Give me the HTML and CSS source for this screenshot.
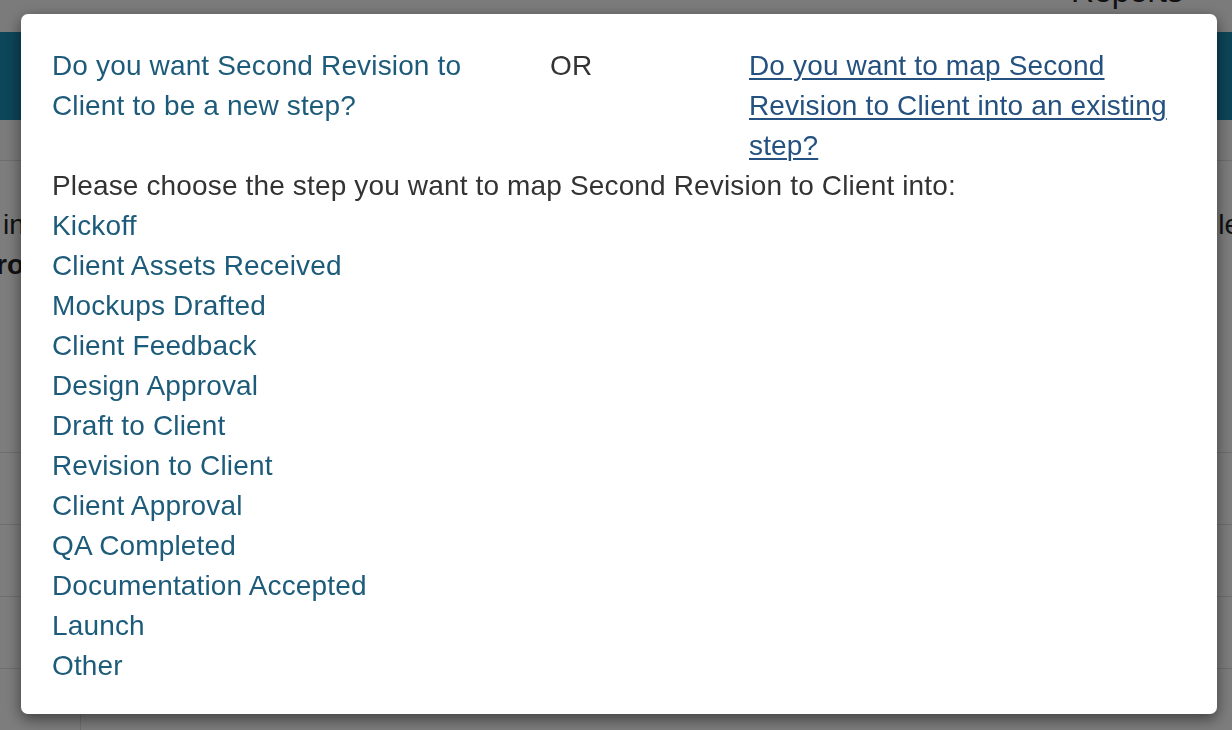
FILE: index.html
```html
<!DOCTYPE html>
<html>
<head>
<meta charset="utf-8">
<link rel="stylesheet" href="styles.css">
</head>
<body>
<div class="page">
  <header class="topbar"><span class="reports">Reports</span></header>
  <nav class="navbar"></nav>
  <div class="subbar"></div>
  <div class="content">
    <div class="textrow"><span class="frag">in</span><span class="frag">le</span></div>
    <div class="textrow"><span class="frag bold cut">ro,</span><span class="frag">h</span></div>
  </div>
  <div class="table">
    <div class="trow"></div>
    <div class="trow"></div>
    <div class="trow"></div>
    <div class="trow last"><div class="tcell"></div></div>
  </div>
</div>
<div class="overlay"></div>
<div class="modal">
  <div class="choice-row">
    <div class="col-side"><a class="plain-link" href="#">Do you want Second Revision to Client to be a new step?</a></div>
    <div class="col-mid">OR</div>
    <div class="col-side"><a class="under-link" href="#">Do you want to map Second Revision to Client into an existing step?</a></div>
  </div>
  <p class="prompt">Please choose the step you want to map Second Revision to Client into:</p>
  <ul class="steps">
    <li><a href="#">Kickoff</a></li>
    <li><a href="#">Client Assets Received</a></li>
    <li><a href="#">Mockups Drafted</a></li>
    <li><a href="#">Client Feedback</a></li>
    <li><a href="#">Design Approval</a></li>
    <li><a href="#">Draft to Client</a></li>
    <li><a href="#">Revision to Client</a></li>
    <li><a href="#">Client Approval</a></li>
    <li><a href="#">QA Completed</a></li>
    <li><a href="#">Documentation Accepted</a></li>
    <li><a href="#">Launch</a></li>
    <li><a href="#">Other</a></li>
  </ul>
</div>
</body>
</html>
```
FILE: styles.css
```css
* { box-sizing: border-box; }
html, body { margin: 0; padding: 0; }
body {
  width: 1232px;
  height: 730px;
  overflow: hidden;
  font-family: "Liberation Sans", Arial, sans-serif;
  color: #333;
  background: #fafafa;
}
.page { width: 1232px; height: 730px; overflow: hidden; }
.topbar {
  height: 32px;
  background: #f6f6f6;
  display: flex;
  justify-content: flex-end;
  align-items: flex-end;
  padding-right: 49px;
  overflow: hidden;
}
.reports {
  font-size: 32px;
  line-height: 30px;
  margin-bottom: 26px;
  color: #222;
}
.navbar { height: 88px; background: #1a8cb2; }
.subbar { height: 41px; background: #f7f7f7; border-bottom: 1px solid #ddd; }
.content { padding-top: 44px; height: 291px; }
.textrow {
  display: flex;
  justify-content: space-between;
  font-size: 28px;
  line-height: 40px;
  color: #222;
}
.frag { display: block; }
.textrow .frag:first-child { margin-left: 3px; }
.textrow .frag:last-child { margin-right: -8px; }
.textrow .cut { margin-left: -4px !important; }
.textrow:nth-child(2) .frag:last-child { margin-right: -16px; }
.bold { font-weight: bold; }
.table { border-top: 1px solid #ddd; }
.trow { height: 72px; border-bottom: 1px solid #ddd; }
.trow.last { border-bottom: none; height: 80px; }
.tcell { width: 81px; height: 100%; border-right: 1px solid #ddd; }
.overlay {
  position: fixed;
  inset: 0;
  background: rgba(0, 0, 0, 0.5);
}
.modal {
  position: fixed;
  top: 14px;
  left: 21px;
  width: 1196px;
  background: #fff;
  border-radius: 7px;
  box-shadow: 0 5px 15px rgba(0, 0, 0, 0.5);
  padding: 32px 31px 28px 31px;
  font-size: 28px;
  line-height: 40px;
  letter-spacing: 0.15px;
  overflow: hidden;
}
a { text-decoration: none; }
.choice-row {
  display: grid;
  grid-template-columns: 468px 199px 1fr;
}
.col-mid { padding-left: 30px; color: #333; }
.col-side:last-child { padding-left: 30px; padding-right: 10px; }
.plain-link { color: #1d5b7a; }
.under-link { color: #24517f; text-decoration: underline; text-underline-offset: 3px; text-decoration-thickness: 2px; }
.prompt { margin: 0; color: #333; }
.steps { list-style: none; margin: 0; padding: 0; }
.steps a { color: #1d5b7a; }
```
